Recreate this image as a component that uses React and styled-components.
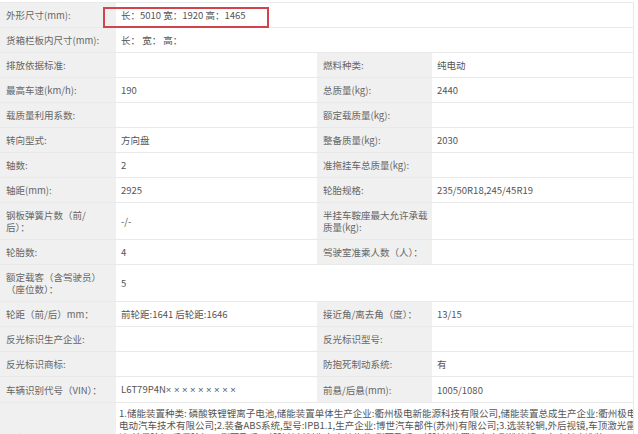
import styled, { createGlobalStyle } from "styled-components";

const GlobalStyle = createGlobalStyle`
  body {
    margin: 0;
    background: #fff;
    font-family: "Noto Sans CJK SC", "Noto Sans", sans-serif;
  }
`;

const Page = styled.div`
  width: 638px;
  height: 434px;
  overflow: hidden;
  padding-top: 2px;
  box-sizing: border-box;
  background: #fff;
`;

const Table = styled.table`
  width: 633px;
  table-layout: fixed;
  border-collapse: collapse;
  font-size: 9.5px;
  line-height: 12px;
`;

const Row = styled.tr`
  border-top: 1px solid #e9e9e9;
  border-bottom: 1px solid #e9e9e9;
`;

const Label = styled.td`
  background: #f0f0f0;
  color: #666;
  padding: 6px 4px 6px 6px;
  vertical-align: middle;
  word-break: break-all;
`;

const Value = styled.td`
  position: relative;
  background: #fff;
  color: #555;
  padding: 6px 5px;
  vertical-align: middle;
  white-space: nowrap;
  border-right: ${(p) => (p.$last ? "1px solid #e9e9e9" : "none")};
`;

const Note = styled.td`
  background: #fff;
  color: #555;
  padding: 4px 0 6px 3px;
  vertical-align: top;
  overflow: hidden;
  border-right: 1px solid #e9e9e9;
`;

const Line = styled.div`
  white-space: nowrap;
`;

const Mask = styled.span`
  font-family: "Liberation Sans", sans-serif;
  letter-spacing: 2.5px;
`;

const RedBox = styled.span`
  position: absolute;
  left: -13px;
  top: 4px;
  width: 166px;
  height: 21px;
  box-sizing: border-box;
  border: 2px solid #d3434d;
`;

const rows = [
  ["排放依据标准:", "", "燃料种类:", "纯电动"],
  ["最高车速(km/h):", "190", "总质量(kg):", "2440"],
  ["载质量利用系数:", "", "额定载质量(kg):", ""],
  ["转向型式:", "方向盘", "整备质量(kg):", "2030"],
  ["轴数:", "2", "准拖挂车总质量(kg):", ""],
  ["轴距(mm):", "2925", "轮胎规格:", "235/50R18,245/45R19"],
  [
    <>
      钢板弹簧片数（前/
      <br />
      后）：
    </>,
    "-/-",
    "半挂车鞍座最大允许承载质量(kg):",
    "",
  ],
  ["轮胎数:", "4", "驾驶室准乘人数（人）：", ""],
];

const rowsAfter = [
  ["轮距（前/后）mm：", "前轮距:1641 后轮距:1646", "接近角/离去角（度）：", "13/15"],
  ["反光标识生产企业:", "", "反光标识型号:", ""],
  ["反光标识商标:", "", "防抱死制动系统:", "有"],
  [
    "车辆识别代号（VIN）：",
    <>
      L6T79P4N<Mask>×××××××××</Mask>
    </>,
    "前悬/后悬(mm):",
    "1005/1080",
  ],
];

const notes = [
  "1.储能装置种类: 磷酸铁锂锂离子电池,储能装置单体生产企业:衢州极电新能源科技有限公司,储能装置总成生产企业:衢州极电",
  "电动汽车技术有限公司;2.装备ABS系统,型号:IPB1.1,生产企业:博世汽车部件(苏州)有限公司;3.选装轮辋,外后视镜,车顶激光雷",
  "达,前保险杠,后保险杠;4.侧面及后下部防护材料为车身结构件,侧面及后下部防护装置与车身刚性连接;5.车身长度选装",
  "5010mm;6.前轮距/后轮距选装1641/1646mm;7.ABS控制器型号:IPB1.1,ABS生产企业:博世汽车部件(苏州)有限公司",
  "8.选装车顶行李架;9.选装后扰流板。",
];

const FourCol = ({ cells }) => (
  <Row>
    <Label>{cells[0]}</Label>
    <Value>{cells[1]}</Value>
    <Label>{cells[2]}</Label>
    <Value $last>{cells[3]}</Value>
  </Row>
);

const App = () => {
  return (
    <Page>
      <GlobalStyle />
      <Table>
        <colgroup>
          <col style={{ width: 116 }} />
          <col style={{ width: 201 }} />
          <col style={{ width: 115 }} />
          <col style={{ width: 201 }} />
        </colgroup>
        <tbody>
          <Row>
            <Label>外形尺寸(mm):</Label>
            <Value colSpan={3} $last>
              长：5010 宽：1920 高：1465
              <RedBox />
            </Value>
          </Row>
          <Row>
            <Label>货箱栏板内尺寸(mm):</Label>
            <Value colSpan={3} $last>长： 宽： 高：</Value>
          </Row>
          {rows.map((r, i) => (
            <FourCol key={"a" + i} cells={r} />
          ))}
          <Row>
            <Label>额定载客（含驾驶员）（座位数）：</Label>
            <Value colSpan={3} $last>5</Value>
          </Row>
          {rowsAfter.map((r, i) => (
            <FourCol key={"b" + i} cells={r} />
          ))}
          <Row>
            <Label>其它:</Label>
            <Note colSpan={3}>
              {notes.map((n) => (
                <Line key={n}>{n}</Line>
              ))}
            </Note>
          </Row>
        </tbody>
      </Table>
    </Page>
  );
};

export default App;
